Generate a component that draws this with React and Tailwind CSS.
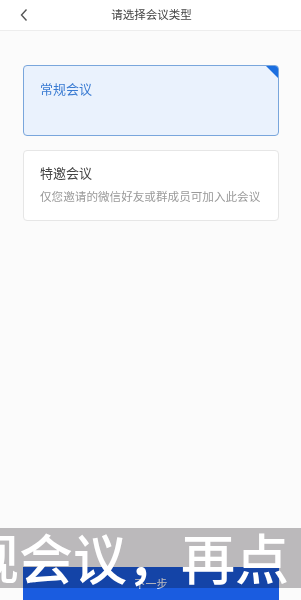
import React, { useState } from 'react'

const font = { fontFamily: '"Noto Sans CJK SC", "Noto Sans", sans-serif' }

function TypeCard({ active, title, desc, onClick }){
  return (
    <div onClick={onClick}
      className={'relative overflow-hidden rounded-[4px] border px-[16px] h-[71px] ' + (active ? 'border-[#79a6dc] bg-[#eaf2fd]' : 'border-[#e6e6e6] bg-white')}>
      {active && <div className="absolute top-0 right-0 w-0 h-0 border-t-[12px] border-l-[12px] border-t-[#1b6ee0] border-l-transparent"/>}
      <div className={'text-[13px] leading-[18px] ' + (active ? 'mt-[14px] text-[#3a7bd2]' : 'mt-[13px] text-[#444]')}>{title}</div>
      {desc && <div className="mt-[6px] text-[11.6px] leading-[16px] text-[#9a9a9a] whitespace-nowrap">{desc}</div>}
    </div>
  )
}

export default function App(){
  const [sel,setSel]=useState(0)
  return (
    <div style={font} className="relative w-[301px] h-[600px] overflow-hidden bg-[#fbfbfb] flex flex-col">
      <header className="h-[31px] shrink-0 bg-white border-b border-[#ededed] flex items-center relative">
        <svg className="absolute left-[19px] top-[8px]" width="10" height="14" viewBox="0 0 10 14">
          <path d="M7.5 1.5 L2.5 7 L7.5 12.5" fill="none" stroke="#555" strokeWidth="1.4"/>
        </svg>
        <div className="flex-1 text-center text-[11.5px] text-[#444] pl-[2px]">请选择会议类型</div>
      </header>

      <div className="pl-[23px] pr-[22px] pt-[34px] flex flex-col gap-[14px]">
        <TypeCard active={sel===0} title="常规会议" onClick={()=>setSel(0)}/>
        <TypeCard active={sel===1} title="特邀会议" desc="仅您邀请的微信好友或群成员可加入此会议" onClick={()=>setSel(1)}/>
      </div>

      <div className="mt-auto pl-[23px] pr-[22px]">
        <button className="w-full h-[33px] bg-[#1a5ce0] text-white text-[11px] leading-[11px] flex items-start justify-center pt-[11px]">下一步</button>
      </div>

      {/* video caption overlay */}
      <div className="absolute left-0 right-0 top-[528px] h-[60px] bg-[#bebcbe] mix-blend-multiply pointer-events-none"/>
      <div className="absolute left-[-35px] top-[527px] h-[60px] whitespace-nowrap text-white font-medium text-[54px] leading-[60px] pointer-events-none">规会议，再点</div>
    </div>
  )
}
